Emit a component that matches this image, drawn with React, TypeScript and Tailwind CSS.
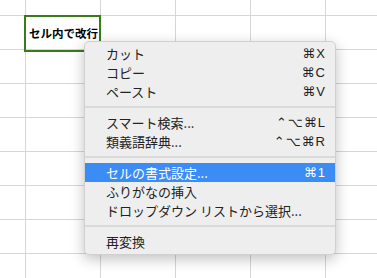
import React from "react";

type Item = { label: string; shortcut?: string; active?: boolean } | "sep";

const items: Item[] = [
  { label: "カット", shortcut: "⌘X" },
  { label: "コピー", shortcut: "⌘C" },
  { label: "ペースト", shortcut: "⌘V" },
  "sep",
  { label: "スマート検索...", shortcut: "⌃⌥⌘L" },
  { label: "類義語辞典...", shortcut: "⌃⌥⌘R" },
  "sep",
  { label: "セルの書式設定...", shortcut: "⌘1", active: true },
  { label: "ふりがなの挿入" },
  { label: "ドロップダウン リストから選択..." },
  "sep",
  { label: "再変換" },
];

const cols = [26, 75, 75, 75, 75, 75];
const rows = [16, 34, 34, 34, 34, 34, 34, 34, 34];

const App: React.FC = () => {
  return (
    <div className="relative w-[377px] h-[278px] overflow-hidden bg-white font-['Noto_Sans_CJK_JP',sans-serif]">
      {/* sheet grid */}
      <div className="flex flex-col">
        {rows.map((h, r) => (
          <div key={r} className="flex">
            {cols.map((w, c) => (
              <div
                key={c}
                className="shrink-0 border-r border-b border-[#d6d6d6]"
                style={{ width: w, height: h }}
              />
            ))}
          </div>
        ))}
      </div>

      {/* selected cell */}
      <div className="absolute left-[24px] top-[15px] w-[77px] h-[37px] border-2 border-[#3b7a1c] flex items-center pl-[3px]">
        <span className="text-[11.5px] font-bold text-black leading-none whitespace-nowrap">
          セル内で改行
        </span>
      </div>

      {/* context menu */}
      <div className="absolute left-[84px] top-[41px] w-[252px] h-[214px] bg-[#eeeeee] rounded-[5px] border border-[#d0d0d0] shadow-[0_4px_14px_rgba(0,0,0,0.25)] pt-[2px] flex flex-col">
        {items.map((it, i) =>
          it === "sep" ? (
            <div key={i} className="h-[12px] flex items-center">
              <div className="w-full h-[2px] bg-[#dadada]" />
            </div>
          ) : (
            <div
              key={i}
              className={
                "h-[19px] flex items-center justify-between pl-[21px] pr-[9px] text-[13px] " +
                (it.active ? "bg-[#3c8cf6] text-white" : "text-[#222222]")
              }
            >
              <span className="whitespace-nowrap">{it.label}</span>
              {it.shortcut && (
                <span className="font-['Liberation_Sans','DejaVu_Sans',sans-serif] tracking-[1px]">
                  {it.shortcut}
                </span>
              )}
            </div>
          )
        )}
      </div>
    </div>
  );
};

export default App;
